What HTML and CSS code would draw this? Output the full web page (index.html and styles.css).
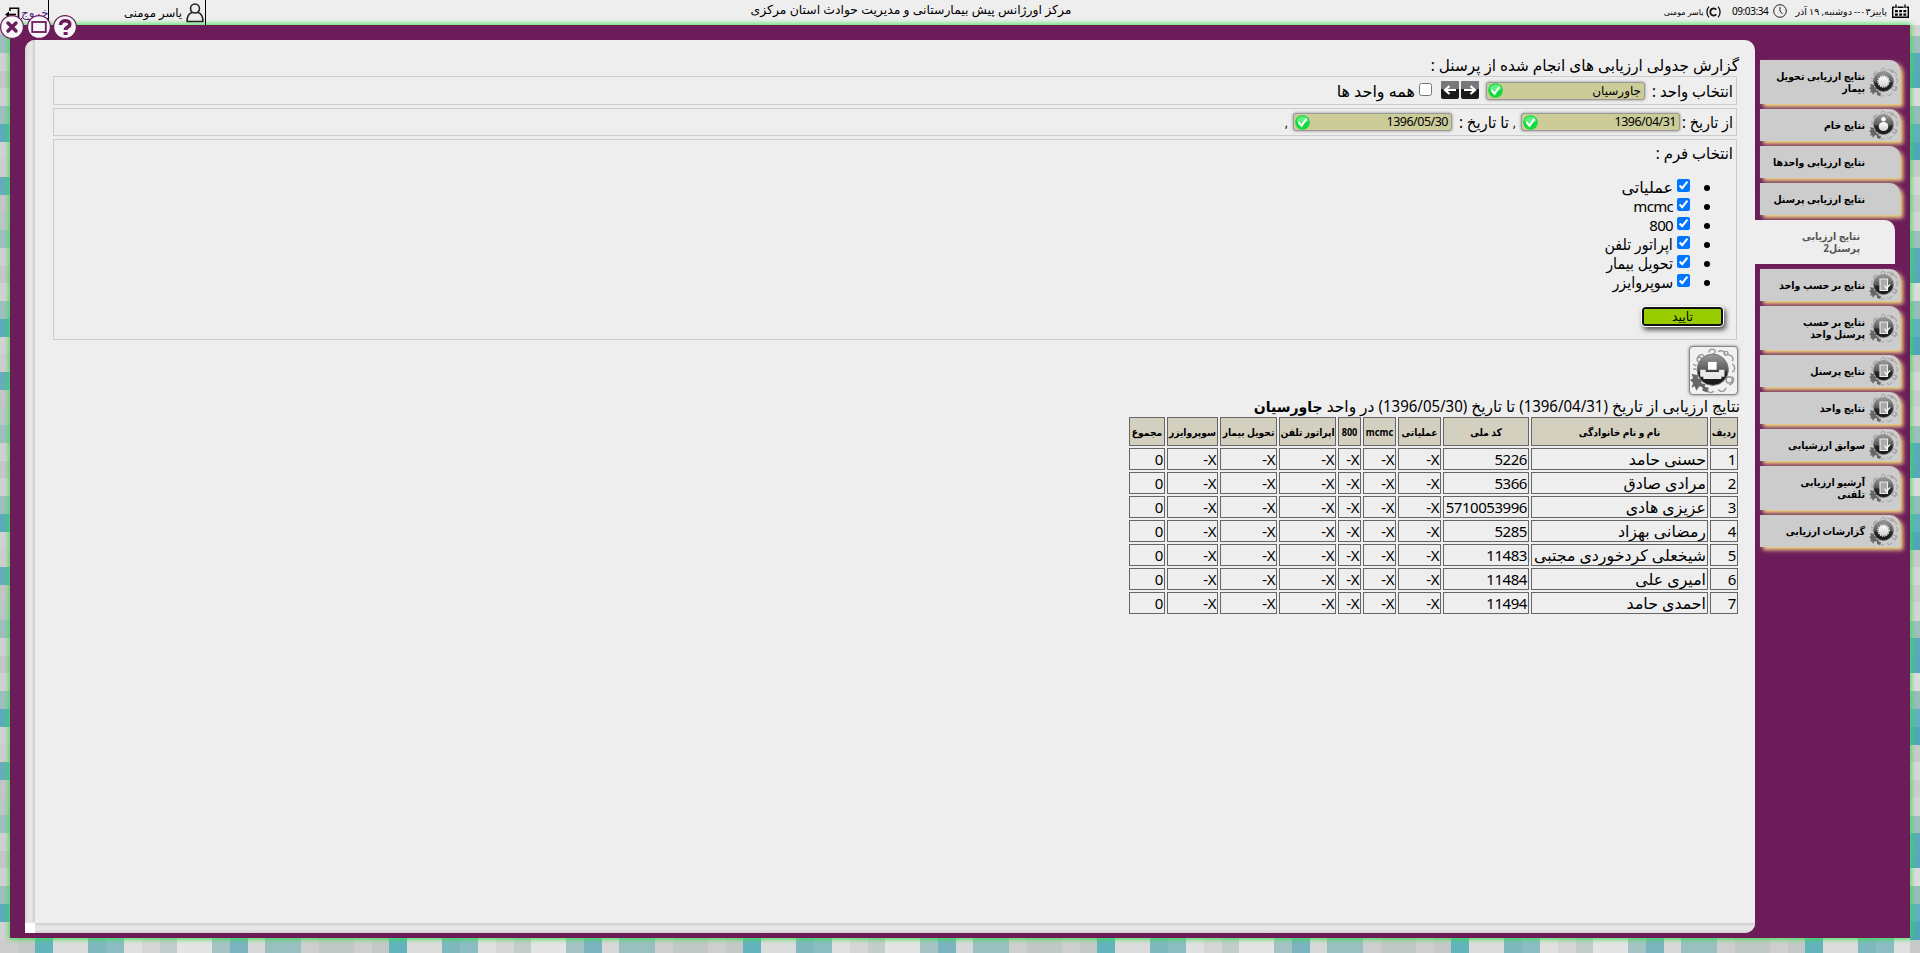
FILE: index.html
```
<!DOCTYPE html>
<html lang="fa" dir="rtl">
<head>
<meta charset="utf-8">
<title>نتایج ارزیابی پرسنل</title>
<link rel="stylesheet" href="styles.css">
</head>
<body>
<svg class="defs" width="0" height="0" aria-hidden="true">
  <defs>
    <linearGradient id="ball" x1="0" y1="0" x2="0" y2="1"><stop offset="0" stop-color="#9d9d9d"/><stop offset=".5" stop-color="#5c5a5a"/><stop offset=".58" stop-color="#2b2727"/><stop offset="1" stop-color="#1a1616"/></linearGradient>
    <linearGradient id="shine" x1="0" y1="0" x2="0" y2="1"><stop offset="0" stop-color="#fff"/><stop offset="1" stop-color="#cfcfcf"/></linearGradient>
    <symbol id="badge" viewBox="0 0 30 30">
      <g fill="none" stroke="#999" stroke-width=".9">
        <path d="M12 3.500c0-2.500 4-3 4-.5 0 1.500-2 1.500-2 2.500M18 3c2-1.500 5 0 4 2M24 5c3 0 4 2 3 4M27 11c2 1 2 4 0 5M27 19c2 2 0 5-2 5M23 26c-1 3-4 3-5 1M15 28c-1 2-4 1-4-1M5 7c0-2 3-3 4-1M2 11l2 1M2 14l2 0"/>
        <circle cx="25" cy="21" r="2"/><circle cx="6" cy="8" r="1.500"/><circle cx="23" cy="4" r="1.200"/>
      </g>
      <path d="M1 17l4 1 0 2 3 1-1 2 3 1-1 2-3-1-2 3-1-3-2 1 1-3-2-2 2-1zM8 25l4 1-1 3-3-1z" fill="#666"/>
      <circle cx="14.500" cy="14.500" r="10" fill="url(#ball)" stroke="#777" stroke-width=".6"/>
    </symbol>
    <symbol id="gear" viewBox="0 0 30 30"><use href="#badge"/><circle cx="14.500" cy="14.500" r="5.300" fill="url(#shine)"/><circle cx="14.500" cy="14.500" r="5.600" fill="none" stroke="#f1f1f1" stroke-width="1.200" stroke-dasharray="1.300 .9"/></symbol>
    <symbol id="person" viewBox="0 0 30 30"><use href="#badge"/><circle cx="14.500" cy="9.300" r="2.300" fill="#fff"/><ellipse cx="14.500" cy="16.500" rx="4.800" ry="4.500" fill="url(#shine)"/></symbol>
    <symbol id="doc" viewBox="0 0 30 30"><use href="#badge"/><path d="M11 9h7.500v11.500h-7.500z" fill="#aaa" stroke="#eee" stroke-width="1.100"/><path d="M15.500 15.500l2 3 3.500-4" fill="none" stroke="#fff" stroke-width="1.200"/></symbol>
    <symbol id="ok" viewBox="0 0 16 16"><circle cx="8" cy="8" r="7.800" fill="#0fdc3c"/><path d="M1.500 6.500a6.800 6.800 0 0 1 13 0c-3 2.500-9 2.500-13 0z" fill="#5cf080"/><path d="M4.300 8.200l2.700 3.200 4.600-6.600" fill="none" stroke="#fff" stroke-width="2.300" stroke-linecap="round"/></symbol>
  </defs>
</svg>

<header class="topbar">
  <a class="logout"><svg width="16" height="14" viewBox="0 0 16 14" fill="none" stroke="#000" stroke-width="1.600"><path d="M6 4V1.200h8.500V12.500H10"/><path d="M12 7.500H3"/><path d="M5 4.500L1 7.500l4 3z" fill="#000" stroke="none"/></svg><span>خروج</span></a>
  <div class="user"><span>یاسر مومنی</span><svg width="18" height="20" viewBox="0 0 18 20" fill="none" stroke="#222" stroke-width="1.600"><circle cx="9" cy="5.500" r="4.500"/><path d="M1 18.500c0-5 2-8 5-9M17 18.500c0-5-2-8-5-9M.5 18.500h17"/></svg></div>
  <h1 class="org">مرکز اورژانس پیش بیمارستانی و مدیریت حوادث استان مرکزی</h1>
  <div class="status">
    <span class="author">یاسر مومنی</span>
    <svg class="copy" width="15" height="12" viewBox="0 0 15 12" fill="none" stroke="#111"><path d="M3 .6C.2 3.500.2 8.500 3 11.400M12 .6c2.800 2.900 2.800 7.900 0 10.800" stroke-width="1.300"/><path d="M10.300 3.800C8.500 1.500 4.300 2.300 4.300 6s4.200 4.500 6 2.200" stroke-width="1.700"/></svg>
    <span class="time">09:03:34</span>
    <svg class="clock" width="14" height="14" viewBox="0 0 14 14" fill="none" stroke="#222"><circle cx="7" cy="7" r="6.300"/><path d="M7 3v4l2.500 3"/></svg>
    <span class="date">پاییز۰۳-- دوشنبه, ۱۹ آذر</span>
    <svg class="cal" width="17" height="14" viewBox="0 0 17 14"><path d="M.7 2.500V13.300H16.300V2.500M.7 3.200h2M5.500 3.200h6M14.500 3.200h2M4 .5v3.500M13 .5v3.500" fill="none" stroke="#000" stroke-width="1.400"/><path d="M3 6h2.800v2.300H3zM7.200 6h2.800v2.300H7.200zM11.400 6h2.800v2.300h-2.800zM3 9.500h2.800v2.300H3zM7.200 9.500h2.800v2.300H7.200zM11.400 9.500h2.800v2.300h-2.800z"/></svg>
  </div>
</header>

<div class="window-buttons">
  <svg width="24" height="24" viewBox="0 0 24 24"><circle cx="12" cy="12" r="11.400" fill="#f6f6f8" stroke="#6c1d59" stroke-width="1.200"/><path d="M8 8l8 8M16 8l-8 8" stroke="#6c1d59" stroke-width="3.400" stroke-linecap="round"/></svg>
  <svg width="24" height="24" viewBox="0 0 24 24"><circle cx="12" cy="12" r="11.400" fill="#f6f6f8" stroke="#6c1d59" stroke-width="1.200"/><rect x="5.200" y="7" width="13.600" height="10" fill="none" stroke="#6c1d59" stroke-width="1.800"/></svg>
  <svg width="24" height="24" viewBox="0 0 24 24"><circle cx="12" cy="12" r="11.400" fill="#f6f6f8" stroke="#6c1d59" stroke-width="1.200"/><path d="M7.500 10c0-5.500 9.300-5.500 9.300-.8 0 3.200-4.300 2.600-4.300 5.800" fill="none" stroke="#6c1d59" stroke-width="3.600"/><rect x="10.600" y="17" width="4" height="3" fill="#6c1d59"/></svg>
</div>

<div class="frame">
  <nav class="sidebar">
    <a class="tab tall"><span>نتایج ارزیابی تحویل<br>بیمار</span><svg><use href="#gear"/></svg></a>
    <a class="tab"><span>نتایج خام</span><svg><use href="#person"/></svg></a>
    <a class="tab"><span>نتایج ارزیابی واحدها</span></a>
    <a class="tab"><span>نتایج ارزیابی پرسنل</span></a>
    <a class="tab tall active"><span>نتایج ارزیابی<br>پرسنل2</span></a>
    <a class="tab"><span>نتایج بر حسب واحد</span><svg><use href="#doc"/></svg></a>
    <a class="tab tall"><span>نتایج بر حسب<br>پرسنل واحد</span><svg><use href="#doc"/></svg></a>
    <a class="tab"><span>نتایج پرسنل</span><svg><use href="#doc"/></svg></a>
    <a class="tab"><span>نتایج واحد</span><svg><use href="#doc"/></svg></a>
    <a class="tab"><span>سوابق ارزشیابی</span><svg><use href="#doc"/></svg></a>
    <a class="tab tall"><span>آرشیو ارزیابی<br>تلفنی</span><svg><use href="#doc"/></svg></a>
    <a class="tab"><span>گزارشات ارزیابی</span><svg><use href="#gear"/></svg></a>
  </nav>

  <div class="panel">
    <div class="panel-main">
      <main class="content">
        <h2 class="heading">گزارش جدولی ارزیابی های انجام شده از پرسنل :</h2>
        <section class="box row unit-row">
          <span class="lbl unit">انتخاب واحد :</span>
          <span class="field"><span class="unit-name">جاورسیان</span><svg><use href="#ok"/></svg></span>
          <span class="arrows">
            <svg width="18" height="18" viewBox="0 0 18 18"><rect width="18" height="18" rx="2" fill="#1c1919"/><path d="M2 0h14a2 2 0 0 1 2 2v6H0V2a2 2 0 0 1 2-2z" fill="#777"/><path d="M3 9h10M9.500 5l4.500 4-4.500 4" fill="none" stroke="#fff" stroke-width="2.200"/></svg>
            <svg width="18" height="18" viewBox="0 0 18 18"><rect width="18" height="18" rx="2" fill="#1c1919"/><path d="M2 0h14a2 2 0 0 1 2 2v6H0V2a2 2 0 0 1 2-2z" fill="#777"/><path d="M15 9H5M8.500 5L4 9l4.500 4" fill="none" stroke="#fff" stroke-width="2.200"/></svg>
          </span>
          <input class="check" type="checkbox"><span class="all">همه واحد ها</span>
        </section>
        <section class="box row date-row">
          <span class="lbl from">از تاریخ :</span>
          <span class="field"><span class="value">1396/04/31</span><svg><use href="#ok"/></svg></span>
          <span class="comma">,</span>
          <span class="lbl to">تا تاریخ :</span>
          <span class="field"><span class="value">1396/05/30</span><svg><use href="#ok"/></svg></span>
          <span class="comma">,</span>
        </section>
        <section class="box forms">
          <div class="lbl form-title">انتخاب فرم :</div>
          <ul class="form-list">
            <li><input class="check" type="checkbox" checked><span>عملیاتی</span></li>
            <li><input class="check" type="checkbox" checked><span class="latin">mcmc</span></li>
            <li><input class="check" type="checkbox" checked><span class="latin">800</span></li>
            <li><input class="check" type="checkbox" checked><span class="narrow">اپراتور تلفن</span></li>
            <li><input class="check" type="checkbox" checked><span class="narrow">تحویل بیمار</span></li>
            <li><input class="check" type="checkbox" checked><span class="narrow">سوپروایزر</span></li>
          </ul>
          <button class="submit">تایید</button>
        </section>
        <div class="print">
          <svg width="47" height="47" viewBox="0 0 30 30"><use href="#badge"/><path d="M11.500 9.500h5.500v5h-5.500z" fill="#fff"/><path d="M6.500 14.500h3.500v1.500h8.500v-1.500h3.500v4.500h-2v1.500H8.500V19h-2z" fill="#e9e9e9"/></svg>
        </div>
        <p class="summary">نتایج ارزیابی از تاریخ <span class="num">(1396/04/31)</span> تا تاریخ <span class="num">(1396/05/30)</span> در واحد <b>جاورسیان</b></p>
        <table class="results">
          <colgroup><col class="c-row"><col class="c-name"><col class="c-code"><col class="c-op"><col class="c-mcmc"><col class="c-800"><col class="c-tel"><col class="c-del"><col class="c-sup"><col class="c-sum"></colgroup>
          <thead><tr><th><span>ردیف</span></th><th><span>نام و نام خانوادگی</span></th><th><span>کد ملی</span></th><th><span>عملیاتی</span></th><th><span>mcmc</span></th><th><span>800</span></th><th><span>اپراتور تلفن</span></th><th><span>تحویل بیمار</span></th><th><span>سوپروایزر</span></th><th><span>مجموع</span></th></tr></thead>
          <tbody>
            <tr><td>1</td><td class="name">حسنی حامد</td><td>5226</td><td>X-</td><td>X-</td><td>X-</td><td>X-</td><td>X-</td><td>X-</td><td>0</td></tr>
            <tr><td>2</td><td class="name">مرادی صادق</td><td>5366</td><td>X-</td><td>X-</td><td>X-</td><td>X-</td><td>X-</td><td>X-</td><td>0</td></tr>
            <tr><td>3</td><td class="name">عزیزی هادی</td><td>5710053996</td><td>X-</td><td>X-</td><td>X-</td><td>X-</td><td>X-</td><td>X-</td><td>0</td></tr>
            <tr><td>4</td><td class="name">رمضانی بهزاد</td><td>5285</td><td>X-</td><td>X-</td><td>X-</td><td>X-</td><td>X-</td><td>X-</td><td>0</td></tr>
            <tr><td>5</td><td class="name">شیخعلی کردخوردی مجتبی</td><td>11483</td><td>X-</td><td>X-</td><td>X-</td><td>X-</td><td>X-</td><td>X-</td><td>0</td></tr>
            <tr><td>6</td><td class="name">امیری علی</td><td>11484</td><td>X-</td><td>X-</td><td>X-</td><td>X-</td><td>X-</td><td>X-</td><td>0</td></tr>
            <tr><td>7</td><td class="name">احمدی حامد</td><td>11494</td><td>X-</td><td>X-</td><td>X-</td><td>X-</td><td>X-</td><td>X-</td><td>0</td></tr>
          </tbody>
        </table>
      </main>
      <div class="scroll-v"></div>
    </div>
    <div class="panel-foot"><div class="scroll-h"></div><div class="corner"></div></div>
  </div>
</div>
</body>
</html>
```
FILE: styles.css
```
* { box-sizing: border-box; }
html, body { margin: 0; height: 953px; overflow: hidden; }
body {
  font-family: "Noto Sans", "DejaVu Sans", sans-serif;
  font-size: 16px;
  color: #000;
  background:
    repeating-linear-gradient(to bottom, #c9cccb 0 17px, #d4d4d4 17px 36px, #9dbfbd 36px 53px, #5babbb 53px 71px, #58aabb 71px 88px, #dcdcdc 88px 106px, #94bdbc 106px 124px, #60b0bd 124px 142px, #50a6b9 142px 160px, #c8cac9 160px 177px, #d6d6d6 177px 195px) 100% -195px / 10px 1200px no-repeat,
    repeating-linear-gradient(to bottom, #5babb9 0 17.700px, #d2d2d2 17.700px 35px, #cecccc 35px 53px, #64adba 53px 71px, #c4c4c4 71px 88.500px, #bac6c4 88.500px 106px, #9dbfbd 106px 124px, #d0d0d0 124px 142px, #c6c6c6 142px 159px, #d2d1d1 159px 177px, #9bbfbe 177px 195px) 0 -71px / 10px 1100px no-repeat,
    repeating-linear-gradient(to right, #cecece 0 18px, #c4c9c7 18px 35px, #63b3bc 35px 53px, #dcdcdc 53px 88px, #7fb8bf 88px 106px, #8bbdc2 106px 124px, #e0e0e0 124px 142px, #d6d6d6 142px 160px, #c3cdcc 160px 177px, #e4e4e4 177px 212px, #a5c3c4 212px 230px, #7bb4bf 230px 248px, #d8d8d8 248px 265px, #98c0c0 265px 301px, #cecece 301px 319px, #c2c8c6 319px 354px);
}
.defs { display: block; position: absolute; }

.topbar { direction: ltr; display: flex; height: 25px; background: #eee; white-space: nowrap; }
.logout { display: flex; width: 49px; padding: 1px 2px 0 4px; gap: 1px; border-right: 1px solid #000; color: #551a8b; font-size: 12px; line-height: 24px; }
.logout span { text-decoration: underline; }
.logout svg { margin-top: 6px; flex: none; }
.user { display: flex; justify-content: flex-end; gap: 4px; width: 157px; padding: 0 1px 0 0; border-right: 1px solid #000; font-size: 11.700px; line-height: 24px; }
.user svg { margin-top: 3px; }
.org { width: 1410px; margin: 0; text-align: center; font-size: 12.400px; font-weight: 400; line-height: 19px; }
.status { display: flex; justify-content: flex-end; width: 293px; line-height: 23px; }
.author { font-size: 8px; direction: rtl; }
.copy { margin: 6px 3px 0; }
.time { width: 44px; text-align: right; font-size: 10px; letter-spacing: -.400px; direction: ltr; }
.clock { margin: 4px 8px 0 5px; }
.date { font-size: 9.600px; direction: rtl; word-spacing: -.400px; }
.cal { margin: 4px 0 0 5px; }

.window-buttons { position: absolute; left: 0; top: 15px; display: flex; direction: ltr; gap: 2.500px; }

.frame { display: flex; height: 913px; margin: 0 10px; padding: 15px 0 5px 15px; background: #6c1d59; box-shadow: 0 0 5px 1px #37e047; }
.sidebar { display: flex; flex-direction: column; gap: 5px; width: 155px; padding: 20px 10px 0 5px; }
.tab { position: relative; display: flow-root; height: 32px; padding: 10px 35px 0 0; border-top-right-radius: 10px; background: #ccc; box-shadow: 3px 3px 4px #f7e08a; font-size: 10.500px; font-weight: 700; line-height: 12px; white-space: nowrap; }
.tab span { display: block; transform: scaleX(.9); transform-origin: right; }
.tab.tall { height: 44px; }
.tab svg { position: absolute; right: 1px; top: 1px; width: 30px; height: 30px; }
.tab.tall svg { top: 7px; }
.tab.active { left: -5px; background: #eee; color: #555; box-shadow: none; }

.panel { display: flex; flex-direction: column; width: 1730px; border-radius: 10px 10px 0 0; overflow: hidden; border-bottom-right-radius: 10px; background: #eee; }
.panel-main { display: flex; flex: 1; }
.content { flex: 1; padding: 13px 18px 0; }
.scroll-v { width: 10px; border-radius: 0 0 3px 3px; background: linear-gradient(to right, #d0d0d0, #e6e6e6 35% 65%, #cbcbcb); }
.panel-foot { display: flex; height: 10px; }
.scroll-h { flex: 1; background: linear-gradient(to bottom, #cecece, #e6e6e6 35% 65%, #d2d2d2); }
.corner { width: 10px; background: #fff; }

.heading { height: 23px; margin: 0 -2px 0 0; font-size: 16px; font-weight: 400; line-height: 24px; transform: scaleX(.955); transform-origin: right; }
.lbl { white-space: nowrap; transform: scaleX(.93); transform-origin: right; }
.box { margin-bottom: 3px; padding: 0 3px; border: 1px solid #ccc; }
.row { display: flex; align-items: center; height: 29px; }
.date-row { height: 28px; }
.unit { width: 88px; }
.from { width: 53px; transform: scaleX(.9); }
.to { width: 57px; }
.all { white-space: nowrap; }
.field { display: flex; align-items: center; justify-content: space-between; width: 159px; height: 18px; padding: 0 3px 0 1px; border: 1px solid #999; border-radius: 3px; background: #cccc99; box-shadow: 0 0 3px #888; line-height: 16px; }
.field svg { width: 15px; height: 15px; }
.unit-name { font-size: 12px; }
.value { font-size: 12.500px; letter-spacing: -.500px; }
.arrows { display: flex; gap: 2px; margin: 0 7px 1px 9px; }
.check { width: 13px; height: 13px; margin: 0 0 2px 4px; }
.comma { width: 12px; padding-right: 5px; font-size: 12px; }

.forms { height: 201px; }
.form-title { height: 28px; line-height: 27px; }
.form-list { margin: 10px 0 0; padding: 0 43px 0 0; list-style: none; }
.form-list li { display: flex; align-items: center; height: 19px; line-height: 19px; }
.form-list li::before { content: ""; width: 6px; height: 6px; margin: 0 -20px 0 14px; border-radius: 50%; background: #000; }
.form-list .check { margin-bottom: 4px; }
.narrow { transform: scaleX(.89); transform-origin: right; }
.latin { font-size: 15px; letter-spacing: -.700px; }
.submit { display: block; width: 81px; height: 19px; margin: 15px 10px 0 0; padding: 0; border: 2px solid #101010; border-radius: 3px; outline: 1px solid #fff; background: #9c0; box-shadow: 2px 3px 5px 1px #555; font: 12.500px/14px "Noto Sans", "DejaVu Sans", sans-serif; }

.print { display: flex; align-items: center; justify-content: center; width: 49px; height: 49px; margin: 6px -1px 0 0; border: 1px solid #888; border-radius: 4px; background: #f1f1f1; box-shadow: 0 0 3px #777; }
.summary { height: 20px; margin: 0 -3px 0 0; line-height: 23px; white-space: nowrap; transform: scaleX(.967); transform-origin: right; }
.num { font-size: 15.500px; letter-spacing: -.400px; }
.summary b { font-size: 14.500px; }

.results { table-layout: fixed; width: 613px; margin-right: -3px; border-spacing: 2px; }
.c-row { width: 28px; } .c-name { width: 177px; } .c-code { width: 86px; } .c-op { width: 43px; } .c-mcmc { width: 33px; }
.c-800 { width: 23px; } .c-tel { width: 57px; } .c-del { width: 57px; } .c-sup { width: 51px; } .c-sum { width: 36px; }
.results th, .results td { border: 1px solid #666; white-space: nowrap; }
.results th { height: 29px; padding: 0; background: #d4d0c0; font-size: 10.400px; line-height: 12px; text-align: center; }
.results th span { display: block; margin: 0 -10px; transform: scaleX(.88); }
.results td { height: 22px; padding: 0 1px; font-size: 15px; line-height: 20px; letter-spacing: -.450px; }
.results .name { font-size: 15.800px; letter-spacing: 0; }
```
